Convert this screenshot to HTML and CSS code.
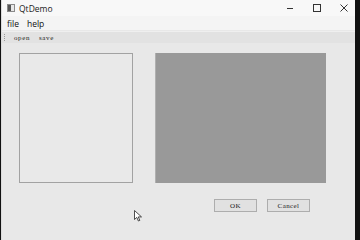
FILE: index.html
```html
<!DOCTYPE html>
<html>

<head>
    <title>QtDemo</title>
    <link rel="stylesheet" href="styles.css">
</head>

<body>
    <div class="window">
        <div class="titlebar">
            <svg class="app-icon" width="8" height="8" viewBox="0 0 8 8">
                <rect x="0.5" y="0.5" width="7" height="7" fill="#e8e8e8" stroke="#8a8a8a" />
                <rect x="1" y="1" width="3" height="6" fill="#555" />
            </svg>
            <span class="title">QtDemo</span>
            <div class="controls">
                <svg width="10" height="10" viewBox="0 0 10 10">
                    <line x1="2" y1="5.5" x2="8" y2="5.5" stroke="#333" />
                </svg>
                <svg width="10" height="10" viewBox="0 0 10 10">
                    <rect x="1.5" y="1.5" width="7" height="7" fill="none" stroke="#333" />
                </svg>
                <svg width="10" height="10" viewBox="0 0 10 10">
                    <path d="M1.5 1.5 L8.5 8.5 M8.5 1.5 L1.5 8.5" stroke="#333" />
                </svg>
            </div>
        </div>
        <div class="menubar">
            <span>file</span>
            <span>help</span>
        </div>
        <div class="toolbar">
            <span class="handle"></span>
            <span class="tool">open</span>
            <span class="tool">save</span>
        </div>
        <div class="content">
            <div class="panels">
                <div class="list-box"></div>
                <div class="view-box"></div>
            </div>
            <div class="buttons">
                <button>OK</button>
                <button>Cancel</button>
            </div>
        </div>
        <svg class="cursor" width="9" height="12" viewBox="0 0 9 12">
            <path d="M0.5 0.5 L0.5 9.5 L2.8 7.4 L4.4 11 L5.8 10.4 L4.3 6.9 L7.5 6.9 Z" fill="#fff" stroke="#222" stroke-width="0.8" />
        </svg>
    </div>
</body>

</html>
```

FILE: styles.css
```css
body {
    margin: 0;
    background-color: #111;
    font-family: "Open Sans", "Noto Sans", sans-serif;
}

.window {
    position: relative;
    width: 353px;
    height: 240px;
    margin-left: 1px;
    background-color: #e8e8e8;
    border-left: 1px solid #dcdcdc;
    overflow: hidden;
}

.titlebar {
    display: flex;
    align-items: center;
    height: 16px;
    background-color: #f8f8f8;
    font-size: 8.5px;
    color: #222;
}

.app-icon {
    margin-left: 5px;
    margin-right: 4px;
}

.controls {
    display: flex;
    margin-left: auto;
    gap: 17px;
    margin-right: 6px;
}

.menubar {
    display: flex;
    align-items: center;
    gap: 8px;
    height: 14px;
    padding-left: 5px;
    background-color: #f4f4f4;
    font-size: 8.5px;
    color: #111;
}

.toolbar {
    display: flex;
    align-items: center;
    height: 11px;
    margin-top: 1px;
    background-color: #e2e2e2;
    border-top: 1px solid #efefef;
    font-family: "Liberation Serif", serif;
    font-size: 7px;
    letter-spacing: 0.6px;
    color: #222;
}

.handle {
    width: 1px;
    height: 7px;
    margin-left: 2px;
    margin-right: 8px;
    border-left: 1px dotted #999;
}

.tool {
    margin-right: 9px;
}

.content {
    display: flex;
    flex-direction: column;
    padding-top: 10px;
    padding-left: 17px;
}

.panels {
    display: flex;
    gap: 22px;
}

.list-box {
    width: 112px;
    height: 128px;
    border: 1px solid #a2a2a2;
    background-color: #e9e9e9;
}

.view-box {
    width: 170px;
    height: 130px;
    background-color: #999;
    border-left: 1px solid #b0b0b0;
}

.buttons {
    display: flex;
    justify-content: flex-end;
    gap: 10px;
    margin-top: 16px;
    padding-right: 45px;
}

button {
    width: 43px;
    height: 13px;
    padding: 0;
    background-color: #e1e1e1;
    border: 1px solid #adadad;
    font-family: "Liberation Serif", serif;
    font-size: 7px;
    letter-spacing: 0.4px;
    color: #222;
}

.cursor {
    position: absolute;
    left: 132px;
    top: 210px;
}
```
